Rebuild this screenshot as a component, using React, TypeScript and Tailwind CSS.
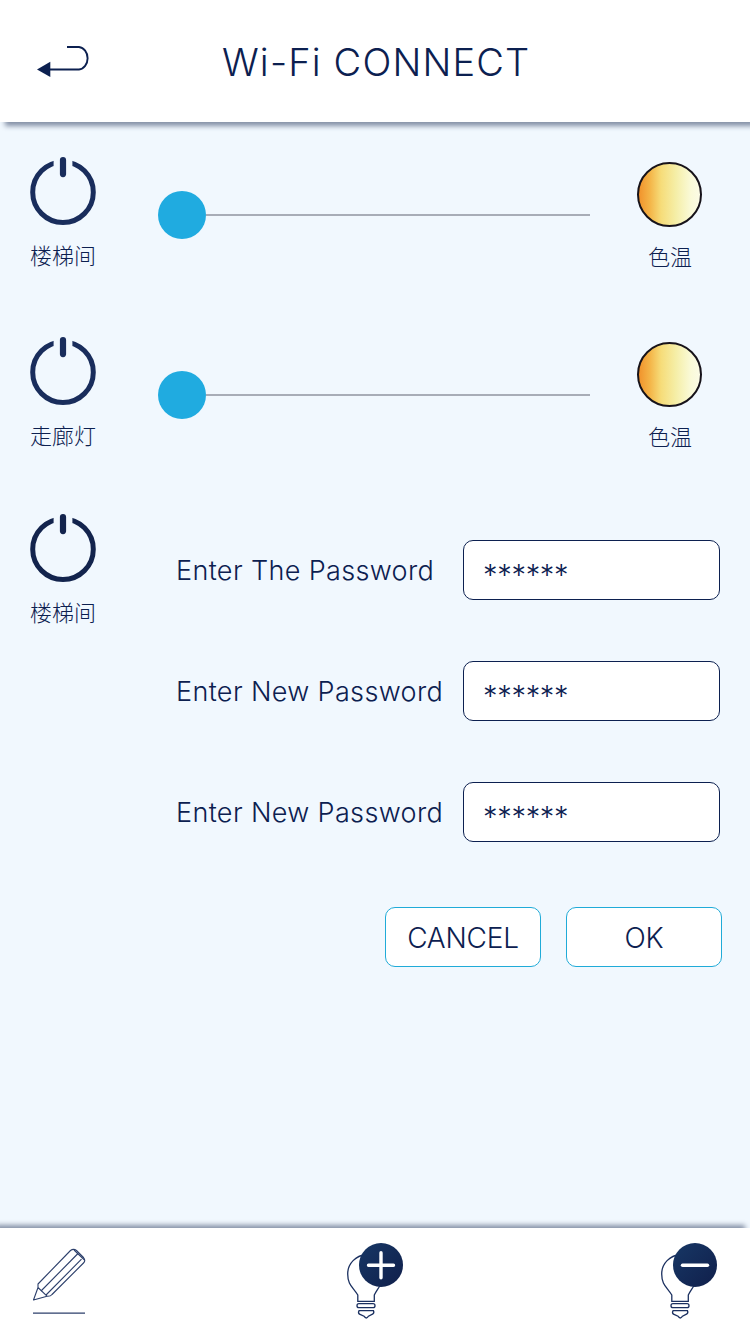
import React from "react";

const CJK = "font-['Noto_Sans_CJK_SC',sans-serif]";

function PowerButton({ label, color }: { label: string; color: string }) {
  return (
    <button className="flex w-[66px] flex-col items-center">
      <svg width="66" height="70" viewBox="0 0 66 70" fill="none" stroke={color}>
        <clipPath id="ring-gap">
          <path d="M0 0H23.600V30H42.400V0H66V70H0Z" />
        </clipPath>
        <circle cx="33" cy="36.200" r="30.300" strokeWidth="5" clipPath="url(#ring-gap)" />
        <path d="M33 4.100V18.100" strokeWidth="6.2" strokeLinecap="round" />
      </svg>
      <span className={`${CJK} mt-[12px] text-[22px] leading-[32px] font-light whitespace-nowrap`}>{label}</span>
    </button>
  );
}

function LightRow({ label }: { label: string }) {
  return (
    <section className="flex items-start">
      <PowerButton label={label} color="#192d5c" />
      <div className="mt-[35px] ml-[62px] flex w-[432px] items-center">
        <div className="size-12 rounded-full bg-[#20abe0]" />
        <div className="h-[2px] flex-1 bg-[#a8adb7]" />
      </div>
      <div className="mt-[6px] ml-[47px] flex w-[65px] flex-col items-center">
        <div className="size-[65px] rounded-full border-2 border-[#17131a] bg-[linear-gradient(90deg,#f1932c_0%,#f4b548_18%,#f6dc79_36%,#f5eea6_60%,#fafad8_85%,#fbfbe6_100%)]" />
        <span className={`${CJK} mt-[12px] ml-px text-[22px] leading-[32px] font-light whitespace-nowrap`}>色温</span>
      </div>
    </section>
  );
}

function PasswordField({ label }: { label: string }) {
  return (
    <label className="flex h-[60px] items-center">
      <span className="w-[287px] pt-[2px] text-[27px] font-light tracking-[0.36px] whitespace-nowrap">{label}</span>
      <input
        defaultValue="******"
        className="h-[60px] w-[257px] rounded-[10px] border border-[#0c2050] bg-white pt-[9px] pl-[19px] text-[29px] font-light tracking-[-0.3px] outline-none"
      />
    </label>
  );
}

function Bulb({ kind }: { kind: "plus" | "minus" }) {
  const id = `badge-${kind}`;
  return (
    <svg width="58" height="78" viewBox="0 0 58 78" fill="none" stroke="#1b3060" strokeWidth="1.3">
      <defs>
        <linearGradient id={id} x1="0" y1="0" x2="1" y2="1">
          <stop offset="0" stopColor="#173765" />
          <stop offset="1" stopColor="#101f4b" />
        </linearGradient>
      </defs>
      <path d="M20 12.500C10 13.800 1.700 21 1.700 32C1.700 43 7 45 11.800 53V59.300H28.300V53C30 49.500 32 47 34 43.500" />
      <rect x="11" y="61.700" width="18" height="3.900" rx="1.950" />
      <path d="M13 68.700H27.500Q28.500 71 26.500 72.200L22.500 74.200Q20.200 77.800 18 74.200L13.500 72.200Q11.800 70.800 13 68.700Z" />
      <circle cx="35" cy="23" r="22" fill={`url(#${id})`} stroke="none" />
      <path
        d={kind === "plus" ? "M22.500 23.300H47.500M35 10.800V35.800" : "M22.500 23.300H47.500"}
        stroke="#fff"
        strokeWidth="3.400"
        strokeLinecap="round"
      />
    </svg>
  );
}

export default function App() {
  return (
    <div className="flex h-[1334px] w-[750px] flex-col overflow-hidden bg-[#f1f8fe] font-['Inter','Noto_Sans_CJK_SC',sans-serif] text-[#0c2050]">
      <header className="flex h-[122px] shrink-0 items-center bg-white pt-[2px] pl-[36px] shadow-[5px_4px_5px_#8490a6]">
        <button aria-label="Back">
          <svg width="54" height="34" viewBox="0 0 54 34" fill="none">
            <path d="M31 2H43A9.500 11.300 0 0 1 43 24.500H13" stroke="#0c2050" strokeWidth="1.900" />
            <path d="M1 24.500L14.300 16.800V32Z" fill="#0c2050" />
          </svg>
        </button>
        <h1 className="ml-[132px] text-[38px] font-light tracking-[1.15px] whitespace-nowrap">Wi-Fi CONNECT</h1>
      </header>

      <main className="flex flex-1 flex-col pl-[30px]">
        <div className="h-[180px] pt-[34px]">
          <LightRow label="楼梯间" />
        </div>
        <div className="h-[177px] pt-[34px]">
          <LightRow label="走廊灯" />
        </div>
        <section className="flex items-start pt-[34px]">
          <PowerButton label="楼梯间" color="#13244d" />
          <form className="mt-[27px] ml-[80px] flex flex-col">
            <div className="flex flex-col gap-[61px]">
              <PasswordField label="Enter The Password" />
              <PasswordField label="Enter New Password" />
              <PasswordField label="Enter New Password" />
            </div>
            <div className="mt-[65px] ml-[209px] flex gap-[25px]">
              <button type="button" className="h-[60px] w-[156px] rounded-[10px] border border-[#20abd8] bg-white pt-[2px] text-[28px] font-light tracking-[-0.2px]">CANCEL</button>
              <button type="button" className="h-[60px] w-[156px] rounded-[10px] border border-[#20abd8] bg-white pt-[2px] text-[28px] font-light tracking-[-0.2px]">OK</button>
            </div>
          </form>
        </section>
      </main>

      <footer className="flex h-[106px] shrink-0 items-start justify-between bg-white pr-[32px] pl-[32px] shadow-[-5px_-3px_5px_#8490a6]">
        <svg className="mt-[20px]" width="54" height="68" viewBox="0 0 54 68" fill="none" stroke="#2c3f6b" strokeWidth="1.100" strokeLinejoin="round">
          <path d="M6 39.500V36L38.500 2.500Q41.500 .2 44.500 2.500L51.500 9.500Q54 12.500 51.500 15L20 46.500Q18.500 48.500 15 48.200L6 39.500L1.500 52L15 48.200" />
          <path d="M9 43L45.500 6M14 47L49.500 11.200M42 2L52.500 12" />
          <path d="M1 65.200H53" strokeWidth="1.300" />
        </svg>
        <div className="mt-[14px] ml-[260px]">
          <Bulb kind="plus" />
        </div>
        <div className="mt-[14px] ml-auto">
          <Bulb kind="minus" />
        </div>
      </footer>
    </div>
  );
}
